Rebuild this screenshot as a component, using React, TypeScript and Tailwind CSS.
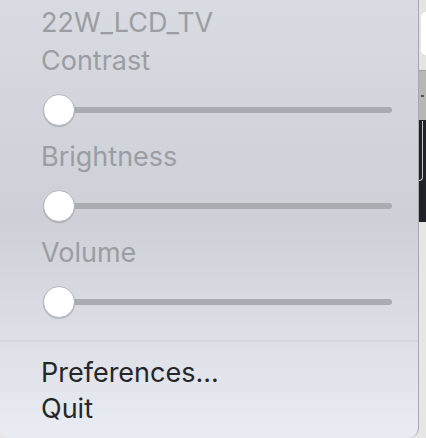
import React from 'react';

const Slider = () => {
  return (
    <div className="h-[58px] pt-[1px] flex items-center pl-[43px]">
      <div className="relative w-[349px] h-[32px] flex items-center">
        <div className="w-full h-[6px] rounded-full bg-[#a9acb1]" />
        <div className="absolute left-0 top-0 w-[32px] h-[32px] rounded-full bg-white border border-[#b4b6ba] shadow-[0_1px_1px_rgba(0,0,0,0.18)]" />
      </div>
    </div>
  );
};

const Label = ({ text }: { text: string }) => (
  <div className="h-[38px] leading-[38px] pl-[41px] text-[27px] text-[#9b9da2]">{text}</div>
);

const App = () => {
  return (
    <div className="w-[426px] h-[438px] flex bg-[#e6e6e6] overflow-hidden" style={{ fontFamily: 'Inter, "Noto Sans", sans-serif' }}>
      <div className="w-[419px] h-[438px] shrink-0 flex flex-col rounded-b-[10px] border-r border-[#a6a8ac] bg-gradient-to-b from-[#d8dbe1] via-[#cdd0d6] to-[#e9ecf3] pt-[4px]">
        <Label text="22W_LCD_TV" />
        <Label text="Contrast" />
        <Slider />
        <Label text="Brightness" />
        <Slider />
        <Label text="Volume" />
        <Slider />
        <div className="mt-[10px] h-[2px] bg-[#d4d7dd]" />
        <div className="pt-[13px] flex flex-col text-[27px] leading-[36px] text-[#262626] pl-[41px]">
          <div>Preferences...</div>
          <div>Quit</div>
        </div>
      </div>
      <div className="flex-1 flex flex-col">
        <div className="h-[70px] bg-[#e4e4e4] pt-[12px]">
          <div className="h-[43px] ml-[2px] rounded-l-[6px] bg-white" />
        </div>
        <div className="h-[50px] bg-[#b7b7b7] border-t border-[#a0a0a0] flex items-center">
          <div className="ml-[2px] w-[3px] h-[2px] bg-[#555]" />
        </div>
        <div className="h-[102px] bg-[#1f2227] pt-[1px]">
          <div className="h-[60px] w-[4px] rounded-br-[4px] border-r border-b border-[#c8c8c8]" />
        </div>
        <div className="flex-1 bg-[#e6e6e6]" />
      </div>
    </div>
  );
};

export default App;
